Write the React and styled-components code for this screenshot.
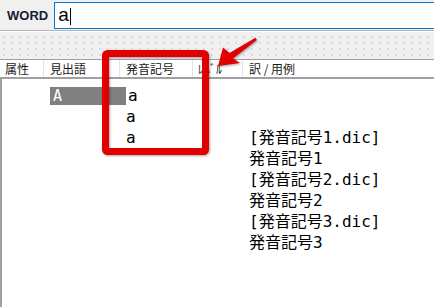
import React from "react";
import styled, { createGlobalStyle } from "styled-components";

const Global = createGlobalStyle`
  html, body { margin: 0; padding: 0; background: #ffffff; overflow: hidden; }
  #root { width: 434px; height: 307px; }
`;

const Window = styled.div`
  position: relative;
  width: 434px;
  height: 307px;
  display: flex;
  flex-direction: column;
  overflow: hidden;
  background: #ffffff;
`;

const TopBar = styled.div`
  height: 31px;
  flex: none;
  display: flex;
  align-items: center;
  gap: 6px;
  padding-left: 7px;
  background: #f0f0f0;
  border-bottom: 1px solid #b4b4b4;
  box-sizing: border-box;
`;

const WordLabel = styled.span`
  font-family: "Liberation Sans", Arial, sans-serif;
  font-weight: bold;
  font-size: 13px;
  color: #1b1b33;
`;

const WordInput = styled.div`
  flex: none;
  width: 420px;
  height: 27px;
  box-sizing: border-box;
  border: 1px solid #0078d7;
  background: #ffffff;
  display: flex;
  align-items: center;
  padding-left: 3px;
  font-family: "Liberation Sans", Arial, sans-serif;
  font-size: 19px;
  color: #000;
`;

const Caret = styled.span`
  display: inline-block;
  width: 1px;
  height: 17px;
  margin-left: 1px;
  margin-top: 2px;
  background: #000;
`;

const Toolbar = styled.div`
  height: 29px;
  flex: none;
  box-sizing: border-box;
  border-top: 1px solid #ffffff;
  border-bottom: 1px solid #a0a0a0;
  background-color: #f0f0f0;
  background-image: radial-gradient(circle, #dadada 0.7px, transparent 1.1px);
  background-size: 8px 6px;
  background-position: 0 2px;
`;

const Header = styled.div`
  height: 19px;
  flex: none;
  box-sizing: border-box;
  display: flex;
  background: #ffffff;
  border-bottom: 2px solid #a0a0a0;
`;

const HeadCell = styled.div`
  width: ${(p) => p.$w}px;
  flex: ${(p) => (p.$w ? "none" : "1")};
  box-sizing: border-box;
  padding-left: ${(p) => p.$pad}px;
  border-right: ${(p) => (p.$w ? "1px solid #e3e3e3" : "none")};
  font-family: "Noto Sans CJK JP", sans-serif;
  font-size: 12px;
  line-height: 17px;
  color: #1a1a1a;
  white-space: nowrap;
  overflow: hidden;
`;

const Body = styled.div`
  flex: 1;
  border-left: 2px solid #a0a0a0;
  padding-top: 6px;
  background: #ffffff;
`;

const Row = styled.div`
  display: grid;
  grid-template-columns: 48px 76px 123px 1fr;
  height: 21px;
  align-items: center;
  font-family: "DejaVu Sans Mono", "Noto Sans CJK JP", monospace;
  font-size: 16px;
  color: #000;
`;

const Cell = styled.div`
  padding-left: ${(p) => p.$pad || 0}px;
  white-space: nowrap;
  line-height: 21px;
`;

const Highlight = styled.div`
  height: 18px;
  line-height: 18px;
  background: #808080;
  color: #ffffff;
  padding-left: 3px;
  font-family: "DejaVu Sans Mono", monospace;
  font-size: 15px;
`;

const Overlay = styled.svg`
  position: absolute;
  left: 0;
  top: 0;
  pointer-events: none;
  filter: drop-shadow(1px 1px 1px rgba(0, 0, 0, 0.35));
`;

const rows = [
  { key: 1, head: "A", pron: "a", pad: 2, text: "" },
  { key: 2, pron: "a", pad: 0, text: "" },
  { key: 3, pron: "a", pad: 0, text: "[発音記号1.dic]" },
  { key: 4, text: "発音記号1" },
  { key: 5, text: "[発音記号2.dic]" },
  { key: 6, text: "発音記号2" },
  { key: 7, text: "[発音記号3.dic]" },
  { key: 8, text: "発音記号3" },
];

export default function App() {
  return (
    <Window>
      <Global />
      <TopBar>
        <WordLabel>WORD</WordLabel>
        <WordInput>
          a<Caret />
        </WordInput>
      </TopBar>
      <Toolbar />
      <Header>
        <HeadCell $w={44} $pad={5}>属性</HeadCell>
        <HeadCell $w={76} $pad={6}>見出語</HeadCell>
        <HeadCell $w={73} $pad={6}>発音記号</HeadCell>
        <HeadCell $w={50} $pad={5}>ﾚﾍﾞﾙ</HeadCell>
        <HeadCell $pad={6}>訳 / 用例</HeadCell>
      </Header>
      <Body>
        {rows.map((r) => (
          <Row key={r.key}>
            <Cell />
            {r.head ? <Highlight>{r.head}</Highlight> : <Cell />}
            <Cell $pad={r.pad}>{r.pron || ""}</Cell>
            <Cell>{r.text}</Cell>
          </Row>
        ))}
      </Body>
      <Overlay width="434" height="307" viewBox="0 0 434 307">
        <rect
          x="105.5"
          y="53.5"
          width="100"
          height="98"
          rx="2"
          fill="none"
          stroke="#e10000"
          strokeWidth="7"
        />
        <polygon
          points="218,66 223,47.5 229.5,53 255.4,37.8 256.8,40 233,58.5 240,63"
          fill="#e10000"
        />
      </Overlay>
    </Window>
  );
}
